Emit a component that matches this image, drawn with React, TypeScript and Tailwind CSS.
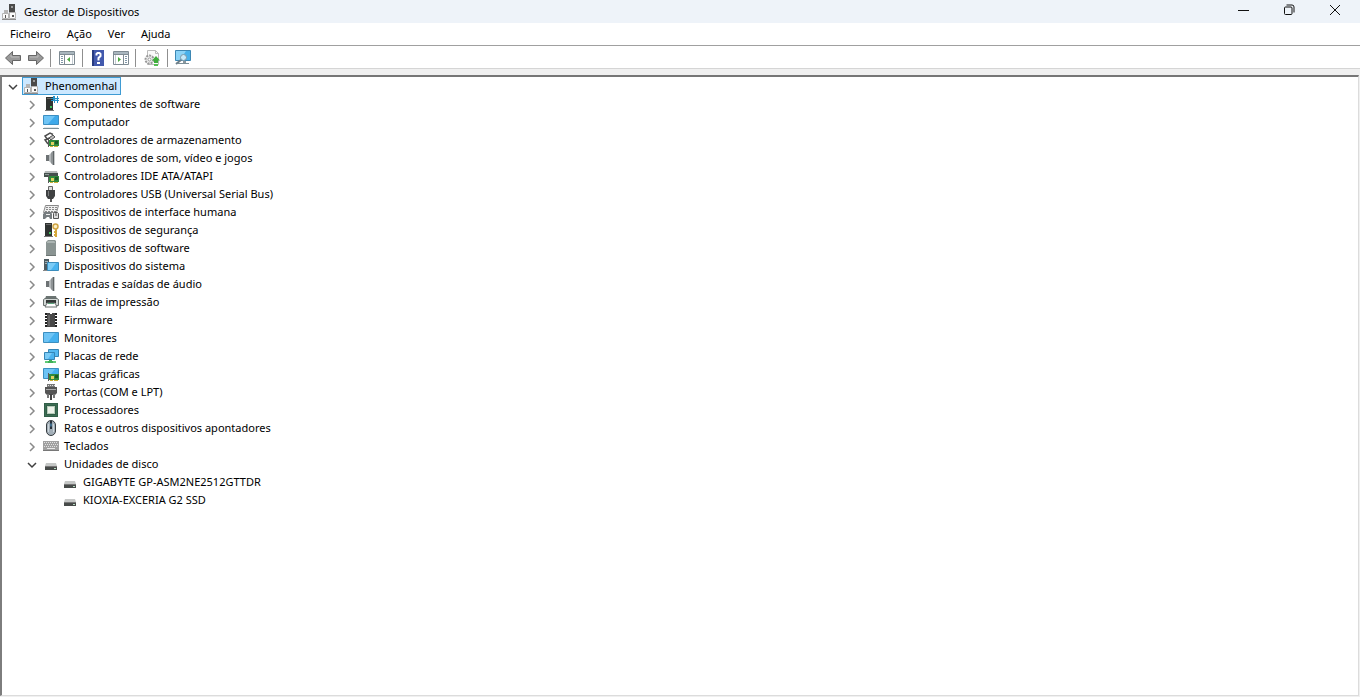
import { useState, type ReactNode } from 'react'

type Category = { label: string; icon: ReactNode; devices?: string[] }

function Icon({ children }: { children: ReactNode }) {
  return (
    <svg width="16" height="16" viewBox="0 0 16 16" fill="none" className="shrink-0" aria-hidden="true">
      {children}
    </svg>
  )
}

function Screen() {
  return (
    <>
      <path d="M.5 2.500h15v10H.5z" fill="#45b0ee" stroke="#3d8fc0" />
      <path d="M1 3h11L5 12H1z" fill="#6ec4f5" />
    </>
  )
}

function Board() {
  return (
    <>
      <path d="M6 8h10v6H6z" fill="#2f8a3c" />
      <path d="M5 7h1v8H5z" fill="#5a5a5a" />
      <path d="M8 10h3v3H8z" fill="#e0d060" />
      <path d="M12 9h3v3h-3z" fill="#1c5a26" />
      <path d="M7 14h3v1H7zM11 14h4v1h-4z" fill="#c9b037" />
    </>
  )
}

function ManagerIcon() {
  return (
    <Icon>
      <path d="M7 0h6v9H7z" fill="#4a4a4a" />
      <path d="M9 2h2v2H9z" fill="#9a9a9a" />
      <path d="M2 6h4v3H2z" fill="#b5b5b5" />
      <path d="M.5 9.500h6v5h-6z" fill="#fafafa" stroke="#b4b4b4" />
      <path d="M7.500 8.500h6v6h-6z" fill="#fafafa" stroke="#b4b4b4" />
      <path d="M3 11h1v3H3zM10 11h2v2h-2z" fill="#555" />
      <path d="M0 15h14v1H0z" fill="#8c8c8c" />
    </Icon>
  )
}

function ComponentIcon() {
  return (
    <Icon>
      <path d="M3 1h7v14H3z" fill="#2f3331" />
      <path d="M4 2h5v1H4z" fill="#666" />
      <path d="M7 10h2v2H7z" fill="#3fc05c" />
      <path d="M2 14h9v1H2z" fill="#777" />
      <path d="M10 0h2v2h2V0h1v2h1v1h-1v1h1v1h-1v2h-1V5h-2v2h-1V5H8V4h2V3H8V2h2z" fill="#2390c8" />
      <path d="M12 3h2v1h-2z" fill="#bfe4f5" />
    </Icon>
  )
}

function ComputerIcon() {
  return (
    <Icon>
      <path d="M.5 1.500h15v9H.5z" fill="#3ea9ea" stroke="#3c8fc2" />
      <path d="M1 2h11L5 10H1z" fill="#6ec4f5" />
      <path d="M0 14h16v1H0z" fill="#7d9099" />
      <path d="M1 13h14v1H1z" fill="#dfe6e8" />
    </Icon>
  )
}

function StorageIcon() {
  return (
    <Icon>
      <path d="M10 2.500 7 1 2 4l2 3 5-2M5 7l-3 1 3 4" stroke="#4d4d4d" strokeWidth="1.500" />
      <path d="m6 6 4-3 2 2-4 3z" fill="#bbb" stroke="#555" />
      <Board />
    </Icon>
  )
}

function SpeakerIcon() {
  return (
    <Icon>
      <path d="M3 5h3v6H3z" fill="#6d7274" />
      <path d="M6 5l4-4v14l-4-4z" fill="#b4b8ba" />
      <path d="M8 3l2-2v14l-2-2z" fill="#8f9496" />
      <path d="M10 1h1v14h-1z" fill="#5f6466" />
      <path d="M11 1h1v14h-1z" fill="#c9cccd" />
    </Icon>
  )
}

function IdeIcon() {
  return (
    <Icon>
      <path d="M2 3h12l1 3H1z" fill="#b5b9b8" />
      <path d="M1 5h14v4H1z" fill="#44504c" />
      <path d="M2 6h4v1H2z" fill="#8c9895" />
      <Board />
    </Icon>
  )
}

function UsbIcon() {
  return (
    <Icon>
      <path d="M5.500.5h4v4h-4z" fill="#ddd" stroke="#666" />
      <path d="M3 4h9v6l-2 3H5l-2-3z" fill="#3f4142" />
      <path d="M5 5h1v5H5z" fill="#7b7d7e" />
      <path d="M7 13h2v3H7z" fill="#555" />
    </Icon>
  )
}

function HidIcon() {
  return (
    <Icon>
      <path d="M2.500 1.500h13l-2 7H.5z" fill="#eee" stroke="#888" />
      <path d="M3 3.500h12M3 5.500h11M2 7.500h11" stroke="#888" strokeDasharray="2 1" />
      <path d="M0 15V10l2-2h6l1 2v5H7l-1-2H4l-2 2z" fill="#777d80" />
      <path d="M3 10h4v1H3z" fill="#eee" />
      <path d="M10.500 14.500v-5l1-1h3l1 1v5z" fill="#ddd" stroke="#555" />
      <path d="M13 8v4" stroke="#555" />
    </Icon>
  )
}

function SecurityIcon() {
  return (
    <Icon>
      <path d="M2 1h7v14H2z" fill="#2f3331" />
      <path d="M3 2h5v1H3z" fill="#666" />
      <path d="M6 10h2v2H6z" fill="#3fc05c" />
      <path d="M1 14h9v1H1z" fill="#777" />
      <circle cx="12.500" cy="4.500" r="2.500" fill="#fbeec2" stroke="#d0a545" strokeWidth="1.500" />
      <path d="M12 7h2v8h-2v-1h-1v-2h1v-1h-1V9h1z" fill="#d6a93c" />
    </Icon>
  )
}

function SoftwareIcon() {
  return (
    <Icon>
      <path d="M5 0h7l1 1v14H3V2z" fill="#8a9492" />
      <path d="M5 1h6l1 1v1H4V2z" fill="#acb5b3" />
      <path d="M3 15h10v1H3z" fill="#6d7573" />
    </Icon>
  )
}

function SystemIcon() {
  return (
    <Icon>
      <path d="M1 1h5v11H1z" fill="#4c5a60" />
      <path d="M2 3h3v1H2zM2 5h3v1H2z" fill="#9db0b6" />
      <path d="M0 12h6v1H0z" fill="#888" />
      <path d="M4.500 4.500h11v8h-11z" fill="#49b3ef" stroke="#3b8dbd" />
      <path d="M5 5h8l-5 7H5z" fill="#7bcbf6" />
    </Icon>
  )
}

function PrinterIcon() {
  return (
    <Icon>
      <path d="M3 2h10l1 3H2z" fill="#6b7472" />
      <path d="M.5 5.500 2 4.500h12l1.500 1v6H.5z" fill="#d2d7d5" stroke="#69716f" />
      <path d="M3 6h10v3H3z" fill="#323836" />
      <path d="m4 9-2 4h12l-2-4z" fill="#fff" stroke="#69716f" />
      <path d="M5 9h6v1H5z" fill="#5ba47c" />
    </Icon>
  )
}

function FirmwareIcon() {
  return (
    <Icon>
      <path d="M4 1h3v1h2V1h3v14H4z" fill="#484848" />
      <path d="M3 1v15M13 1v15" stroke="#222" strokeWidth="2" strokeDasharray="2 1" />
      <path d="M5 3h2v11H5z" fill="#666" />
    </Icon>
  )
}

function MonitorIcon() {
  return (
    <Icon>
      <Screen />
    </Icon>
  )
}

function NetworkIcon() {
  return (
    <Icon>
      <path d="M5.500 1.500h10v7h-10z" fill="#55b9f0" stroke="#3585b5" />
      <path d="M1.500 4.500h10v7h-10z" fill="#4cb4ef" stroke="#3585b5" />
      <path d="M2 5h7l-4 6H2z" fill="#7bcbf6" />
      <path d="M6 12h3v1H6z" fill="#3faf58" />
      <path d="M2 13h11v2H2z" fill="#62cb77" />
      <path d="M5 13h5v2H5z" fill="#3faf58" />
    </Icon>
  )
}

function GraphicsIcon() {
  return (
    <Icon>
      <Screen />
      <Board />
    </Icon>
  )
}

function PortIcon() {
  return (
    <Icon>
      <path d="M4 0h8v3H4z" fill="#777" />
      <path d="M5 1.500h7" stroke="#ddd" strokeDasharray="1 1" />
      <path d="M2 3h12v6l-2 2H4L2 9z" fill="#555" />
      <path d="M3 5h10v1H3z" fill="#aaa" />
      <path d="M4 10h2v4H4zM10 10h2v4h-2z" fill="#777" />
      <path d="M7 10h2v6H7z" fill="#444" />
    </Icon>
  )
}

function CpuIcon() {
  return (
    <Icon>
      <path d="M1 1h14v14H1z" fill="#315f48" />
      <path d="M2.500 2.500h11v11h-11z" stroke="#4a7c60" strokeDasharray="1 1" />
      <path d="M4 4h8v8H4z" fill="#b8ccba" />
      <path d="M5 5h6v6H5z" fill="#edf2ea" />
    </Icon>
  )
}

function MouseIcon() {
  return (
    <Icon>
      <rect x="3.500" y=".5" width="9" height="15" rx="4.500" fill="#a3afb8" stroke="#363c40" />
      <path d="M5.500 4v8M10.500 4v8" stroke="#ccd5db" />
      <path d="M7 1h2v8H7z" fill="#27303a" />
      <path d="M7.500 3.500h1v3h-1z" fill="#58a7da" />
    </Icon>
  )
}

function KeyboardIcon() {
  return (
    <Icon>
      <path d="M0 3h16v9H0z" fill="#a0a0a0" />
      <path d="M1 4.500h14M1 8.500h14" stroke="#e0e0e0" strokeDasharray="1 1" />
      <path d="M2 6.500h13" stroke="#e0e0e0" strokeDasharray="1 1" />
      <path d="M4 10.500h8" stroke="#e8e8e8" />
      <path d="M0 12h16v1H0z" fill="#777" />
    </Icon>
  )
}

function DiskIcon() {
  return (
    <Icon>
      <path d="M3 7h10l1 3H2z" fill="#c5c7c6" />
      <path d="M2 10h12v4H2z" fill="#474b49" />
      <path d="M2 10h12v1H2z" fill="#777" />
      <path d="M11 12h2v1h-2z" fill="#b8dcc2" />
    </Icon>
  )
}

const categories: Category[] = [
  { label: 'Componentes de software', icon: <ComponentIcon /> },
  { label: 'Computador', icon: <ComputerIcon /> },
  { label: 'Controladores de armazenamento', icon: <StorageIcon /> },
  { label: 'Controladores de som, vídeo e jogos', icon: <SpeakerIcon /> },
  { label: 'Controladores IDE ATA/ATAPI', icon: <IdeIcon /> },
  { label: 'Controladores USB (Universal Serial Bus)', icon: <UsbIcon /> },
  { label: 'Dispositivos de interface humana', icon: <HidIcon /> },
  { label: 'Dispositivos de segurança', icon: <SecurityIcon /> },
  { label: 'Dispositivos de software', icon: <SoftwareIcon /> },
  { label: 'Dispositivos do sistema', icon: <SystemIcon /> },
  { label: 'Entradas e saídas de áudio', icon: <SpeakerIcon /> },
  { label: 'Filas de impressão', icon: <PrinterIcon /> },
  { label: 'Firmware', icon: <FirmwareIcon /> },
  { label: 'Monitores', icon: <MonitorIcon /> },
  { label: 'Placas de rede', icon: <NetworkIcon /> },
  { label: 'Placas gráficas', icon: <GraphicsIcon /> },
  { label: 'Portas (COM e LPT)', icon: <PortIcon /> },
  { label: 'Processadores', icon: <CpuIcon /> },
  { label: 'Ratos e outros dispositivos apontadores', icon: <MouseIcon /> },
  { label: 'Teclados', icon: <KeyboardIcon /> },
  {
    label: 'Unidades de disco',
    icon: <DiskIcon />,
    devices: ['GIGABYTE GP-ASM2NE2512GTTDR', 'KIOXIA-EXCERIA G2 SSD'],
  },
]

function Arrow({ flip }: { flip?: boolean }) {
  return (
    <Icon>
      <path
        d={flip ? 'M15.500 8 8.500 1.500v4h-8v5h8v4z' : 'M.5 8l7-6.500v4h8v5h-8v4z'}
        fill="#999"
        stroke="#666"
      />
      <path d={flip ? 'M2 7h8V5' : 'M14 7H6V5'} stroke="#bbb" />
    </Icon>
  )
}

// window with a side pane, the pane sits left or right of the green arrow
function PaneIcon({ left }: { left?: boolean }) {
  return (
    <Icon>
      <path d="M.5 1.500h15v13H.5z" fill="#fff" stroke="#7f8b93" />
      <path d="M1 2h14v2H1z" fill="#a9b6be" />
      <path d="M1 4.500h14" stroke="#7f8b93" />
      <path d={left ? 'M5.500 5v9' : 'M10.500 5v9'} stroke="#7f8b93" />
      <path d={left ? 'M2 6.500h2M2 8.500h2M2 10.500h2M2 12.500h2' : 'M12 6.500h2M12 8.500h2M12 10.500h2M12 12.500h2'} stroke="#8197a8" />
      <path d={left ? 'M11 7v5L8 9.500z' : 'M5 7v5l3-2.500z'} fill="#4aa93f" />
      <path d={left ? 'M13.500 5v9' : 'M2.500 5v9'} stroke="#c2cad0" />
    </Icon>
  )
}

function HelpIcon() {
  return (
    <Icon>
      <path d="M2 0h12v16H2z" fill="#4259ad" />
      <path d="M2 0h2v16H2z" fill="#273b80" />
      <path d="M6.500 5.500V4l1-1h2l1 1v2L8.500 8v2.500" stroke="#fff" strokeWidth="2" />
      <path d="M7 12h3v2H7z" fill="#fff" />
    </Icon>
  )
}

function ScanIcon() {
  return (
    <Icon>
      <path d="M3.500.5h8l3 3v11h-11z" fill="#fafafa" stroke="#bbb" />
      <path d="M11.500.5v3h3" stroke="#bbb" />
      <circle cx="5.500" cy="9.500" r="4" fill="#eee" stroke="#999" strokeWidth="2" strokeDasharray="2 1" />
      <circle cx="5.500" cy="9.500" r="1.500" fill="#fff" stroke="#999" />
      <path d="m12 6 4 4.500h-2V13h-4v-2.500H8z" fill="#3fae3c" />
      <path d="M10 14h4v2h-4z" fill="#55bd52" />
    </Icon>
  )
}

function FindIcon() {
  return (
    <Icon>
      <path d="M.5.5h15v10H.5z" fill="#49b1ea" stroke="#3d87b3" />
      <path d="M1 1h10L5 10H1z" fill="#8bd3f7" />
      <path d="M8 11h3v2H8z" fill="#8a979e" />
      <path d="M3 13h11v1H3z" fill="#7d9099" />
      <circle cx="8.500" cy="7.500" r="3" fill="#c6e9fa" stroke="#7d98a8" />
      <path d="m6 10-5 4" stroke="#6d7e88" strokeWidth="2" />
    </Icon>
  )
}

function Chevron({ open }: { open: boolean }) {
  return (
    <svg width="10" height="10" viewBox="0 0 10 10" fill="none" strokeWidth="1.500" aria-hidden="true">
      {open ? <path d="m1 3 4 4 4-4" stroke="#404040" /> : <path d="m3 1 4 4-4 4" stroke="#8a8a8a" />}
    </svg>
  )
}

function Toggle({ open, label, onClick }: { open: boolean; label: string; onClick: () => void }) {
  return (
    <button type="button" aria-label={label} aria-expanded={open} onClick={onClick} className="flex h-full w-5 items-center justify-end pt-px pr-1">
      <Chevron open={open} />
    </button>
  )
}

function NodeLabel({ icon, label, selected }: { icon: ReactNode; label: string; selected?: boolean }) {
  return (
    <button
      type="button"
      className={`flex h-full items-center gap-[5px] border pl-px pr-[3px] whitespace-nowrap ${
        selected ? 'border-[#3f9bd3] bg-[#cce8ff]' : 'border-transparent'
      }`}
    >
      {icon}
      <span className="leading-4">{label}</span>
    </button>
  )
}

function ToolButton({ label, children }: { label: string; children: ReactNode }) {
  return (
    <button type="button" aria-label={label} className="flex h-full w-[23px] items-center justify-center">
      {children}
    </button>
  )
}

function Divider() {
  return <div className="mx-[3px] h-[18px] w-px bg-[#8f8f8f]" />
}

export default function App() {
  const [rootOpen, setRootOpen] = useState(true)
  const [expanded, setExpanded] = useState<string[]>(['Unidades de disco'])

  const toggle = (label: string) =>
    setExpanded((prev) => (prev.includes(label) ? prev.filter((l) => l !== label) : [...prev, label]))

  return (
    <div className="flex min-h-screen flex-col bg-[#f0f0f0] font-['Noto_Sans','Open_Sans',sans-serif] text-[11px] text-black">
      <header className="flex h-[23px] items-center justify-between bg-[#eef3f9] pl-[2px] pr-[2px]">
        <div className="flex items-center gap-[6px]">
          <ManagerIcon />
          <h1 className="leading-4">Gestor de Dispositivos</h1>
        </div>
        <div className="flex h-full pb-[3px]">
          <button type="button" aria-label="Minimizar" className="flex w-[46px] items-center justify-center">
            <svg width="12" height="12" viewBox="0 0 12 12" fill="none" stroke="#111"><path d="M1 6.500h11" /></svg>
          </button>
          <button type="button" aria-label="Restaurar" className="flex w-[46px] items-center justify-center">
            <svg width="12" height="12" viewBox="0 0 12 12" fill="none" stroke="#111">
              <rect x="1.500" y="3" width="7.500" height="7.500" rx="1" />
              <path d="M3.500 1H9a2 2 0 0 1 2 2v5.500" />
            </svg>
          </button>
          <button type="button" aria-label="Fechar" className="flex w-[46px] items-center justify-center">
            <svg width="12" height="12" viewBox="0 0 12 12" fill="none" stroke="#111"><path d="m1 1 10 10M11 1 1 11" /></svg>
          </button>
        </div>
      </header>

      <nav className="flex h-[23px] items-center border-b border-[#a0a0a0] bg-white pl-[2px]">
        {['Ficheiro', 'Ação', 'Ver', 'Ajuda'].map((item) => (
          <button key={item} type="button" className="px-2 leading-4">{item}</button>
        ))}
      </nav>

      <div className="flex h-[23px] items-center border-b border-[#d5d5d5] bg-white pl-px pt-px">
        <ToolButton label="Retroceder"><Arrow /></ToolButton>
        <ToolButton label="Avançar"><Arrow flip /></ToolButton>
        <Divider />
        <div className="px-px"><ToolButton label="Mostrar árvore"><PaneIcon left /></ToolButton></div>
        <Divider />
        <ToolButton label="Ajuda"><HelpIcon /></ToolButton>
        <ToolButton label="Mostrar ações"><PaneIcon /></ToolButton>
        <Divider />
        <div className="px-px"><ToolButton label="Atualizar controlador"><ScanIcon /></ToolButton></div>
        <Divider />
        <ToolButton label="Procurar alterações de hardware"><FindIcon /></ToolButton>
      </div>

      <main className="mt-[6px] mb-px mr-px flex-1 border-t-2 border-r border-b border-l-2 border-t-[#767676] border-r-[#dcdcdc] border-b-[#dcdcdc] border-l-[#7d7d7d] bg-white">
        <div className="flex h-[18px] items-center">
          <Toggle open={rootOpen} label="Phenomenhal" onClick={() => setRootOpen(!rootOpen)} />
          <NodeLabel icon={<ManagerIcon />} label="Phenomenhal" selected />
        </div>
        {rootOpen && (
          <ul className="pl-[19px]">
            {categories.map(({ label, icon, devices }) => {
              const open = expanded.includes(label)
              return (
                <li key={label}>
                  <div className="flex h-[18px] items-center">
                    <Toggle open={open} label={`Expandir ${label}`} onClick={() => toggle(label)} />
                    <NodeLabel icon={icon} label={label} />
                  </div>
                  {open && devices && (
                    <ul className="pl-[39px]">
                      {devices.map((device) => (
                        <li key={device} className="flex h-[18px]">
                          <NodeLabel icon={<DiskIcon />} label={device} />
                        </li>
                      ))}
                    </ul>
                  )}
                </li>
              )
            })}
          </ul>
        )}
      </main>
    </div>
  )
}
